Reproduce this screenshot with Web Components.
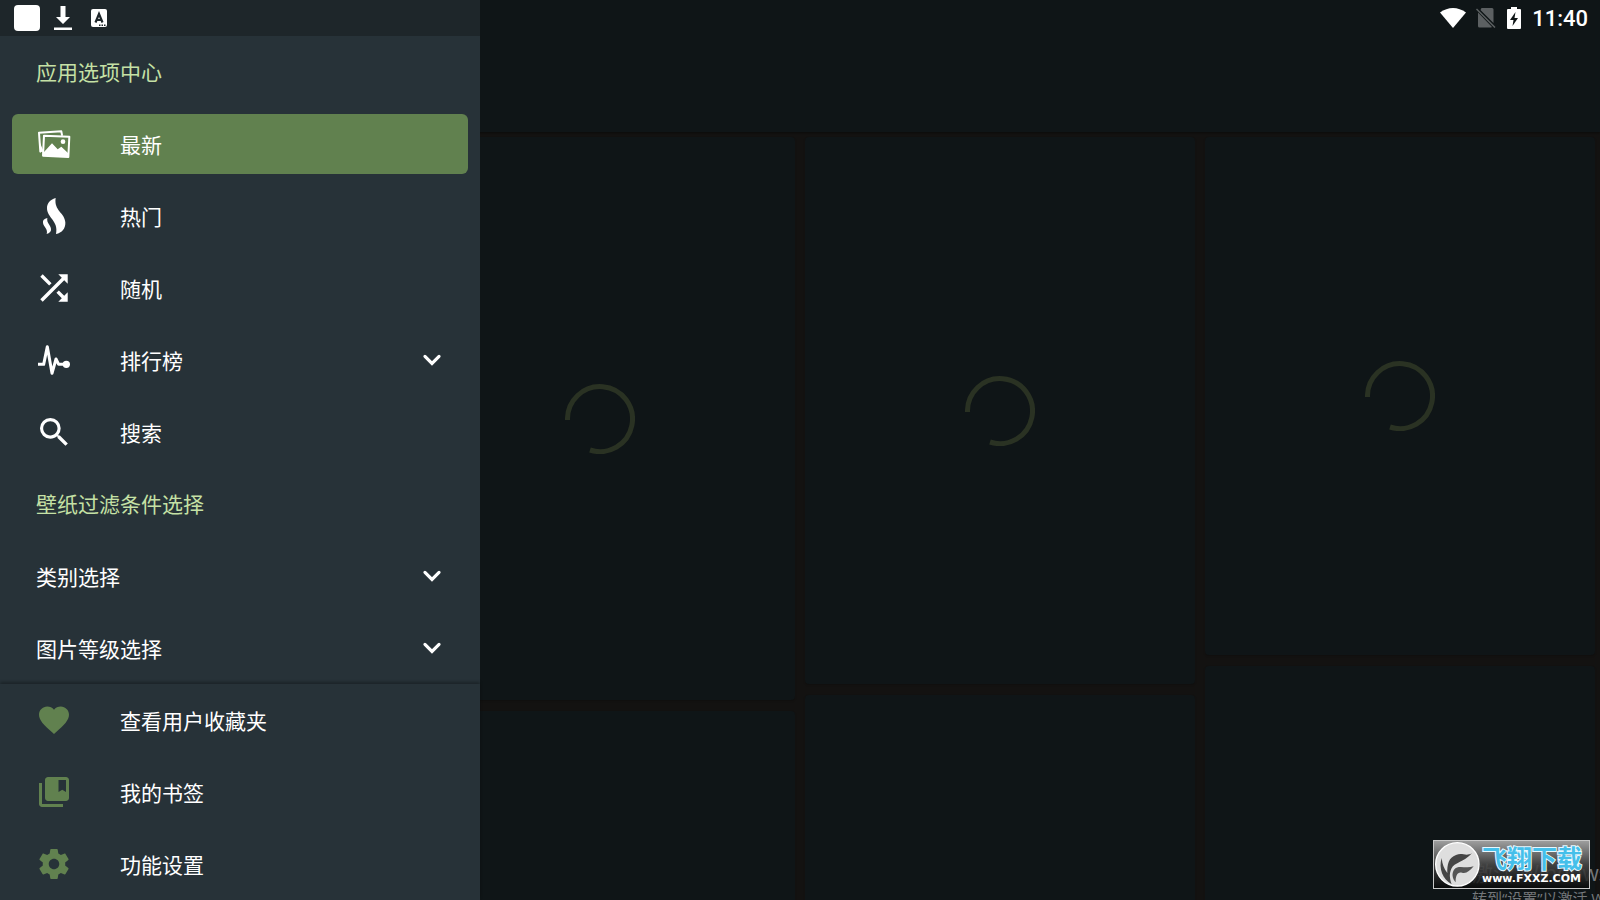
<!DOCTYPE html>
<html lang="zh-CN">
<head>
<meta charset="UTF-8">
<meta name="viewport" content="width=device-width, initial-scale=1.0">
<title>壁纸</title>
<style>
    :root {
        --surface: #273238;
        --accent: #61814f;
        --accent-light: #c5e1a5;
        --card: #0f1517;
        --backdrop: #131211;
        --row: 72px;
    }
    html, body {
        height: 100%;
    }
    body {
        margin: 0;
        overflow: hidden;
        background: var(--backdrop);
        color: #fff;
        font: 21px/30px Roboto, "Noto Sans CJK SC", sans-serif;
    }
</style>
</head>
<body>
<wallpaper-app></wallpaper-app>

<script>
const ICONS = {
    photos: `<svg viewBox="108 378 108 108">
        <path d="M124 452L121 455L117 398L184 394L186 405" fill="none" stroke="currentColor" stroke-width="6" stroke-linejoin="round" stroke-linecap="round"/>
        <path d="M118 424L129 450L128 457L121 454Z"/>
        <path d="M132 407L208 410L205 471L129 467Z" fill="none" stroke="currentColor" stroke-width="6" stroke-linejoin="round"/>
        <path d="M132 456L156 430L173 448L184 440L204 459L205 471L129 467Z"/>
        <circle cx="189" cy="425" r="7"/></svg>`,
    fire: `<svg viewBox="108 54 108 108">
        <path d="M167 54C149 59 141 71 141 85C141 113 177 124 168 162C186 159 197 146 196 127C195 99 161 92 167 54Z"/>
        <path d="M142 114C132 116 128 121 129 128C130 140 145 146 140 162C149 160 154 154 153 147C153 136 139 130 142 114Z"/></svg>`,
    shuffle: `<svg viewBox="1.5 1.5 21 21"><path d="M10.59 9.17 5.41 4 4 5.41l5.17 5.17 1.42-1.41zM14.5 4l2.04 2.04L4 18.59 5.41 20 17.96 7.46 20 9.5V4h-5.5zm.33 9.41-1.41 1.41 3.13 3.13L14.5 20H20v-5.5l-2.04 2.04-3.13-3.13z"/></svg>`,
    pulse: `<svg viewBox="108 486 108 108">
        <path d="M114 553H131L142 500L156 580L168 537L176 553H192" fill="none" stroke="currentColor" stroke-width="9" stroke-linejoin="round"/>
        <circle cx="199" cy="553" r="11"/></svg>`,
    search: `<svg viewBox="0.5 0.5 22.6 22.6"><path d="M15.5 14h-.79l-.28-.27A6.47 6.47 0 0 0 16 9.5 6.5 6.5 0 1 0 9.5 16c1.61 0 3.09-.59 4.23-1.57l.27.28v.79l5 4.99L20.49 19l-4.99-5zm-6 0C7.01 14 5 11.99 5 9.5S7.01 5 9.5 5 14 7.01 14 9.5 11.99 14 9.5 14z"/></svg>`,
    heart: `<svg viewBox="0 0 24 24"><path d="M12 21.35l-1.45-1.32C5.4 15.36 2 12.28 2 8.5 2 5.42 4.42 3 7.5 3c1.74 0 3.41.81 4.5 2.09C13.09 3.81 14.76 3 16.5 3 19.58 3 22 5.42 22 8.5c0 3.78-3.4 6.86-8.55 11.54L12 21.35z"/></svg>`,
    bookmarks: `<svg viewBox="0 0 24 24"><path d="M4 6H2v14c0 1.1.9 2 2 2h14v-2H4V6z"/><path d="M20 2H8c-1.1 0-2 .9-2 2v12c0 1.1.9 2 2 2h12c1.1 0 2-.9 2-2V4c0-1.1-.9-2-2-2zm0 10l-2.5-1.5L15 12V4h5v8z"/></svg>`,
    settings: `<svg viewBox="0 0 24 24"><path d="M19.43 12.98c.04-.32.07-.64.07-.98s-.03-.66-.07-.98l2.11-1.65c.19-.15.24-.42.12-.64l-2-3.46c-.12-.22-.39-.3-.61-.22l-2.49 1c-.52-.4-1.08-.73-1.69-.98l-.38-2.65C14.46 2.18 14.25 2 14 2h-4c-.25 0-.46.18-.49.42l-.38 2.65c-.61.25-1.17.59-1.69.98l-2.49-1c-.23-.09-.49 0-.61.22l-2 3.46c-.13.22-.07.49.12.64l2.11 1.65c-.04.32-.07.65-.07.98s.03.66.07.98l-2.11 1.65c-.19.15-.24.42-.12.64l2 3.46c.12.22.39.3.61.22l2.49-1c.52.4 1.08.73 1.69.98l.38 2.65c.03.24.24.42.49.42h4c.25 0 .46-.18.49-.42l.38-2.65c.61-.25 1.17-.59 1.69-.98l2.49 1c.23.09.49 0 .61-.22l2-3.46c.12-.22.07-.49-.12-.64l-2.11-1.65zM12 15.5c-1.93 0-3.5-1.57-3.5-3.5s1.57-3.5 3.5-3.5 3.5 1.57 3.5 3.5-1.57 3.5-3.5 3.5z"/></svg>`,
    chevron: `<svg viewBox="0 0 24 24"><path d="M7.3 9.6L12 14.3L16.7 9.6" fill="none" stroke="currentColor" stroke-width="2.1" stroke-linecap="round"/></svg>`
};

// Android status bar
class StatusBar extends HTMLElement {
    constructor() {
        super();
        this.attachShadow({ mode: 'open' });
    }

    connectedCallback() {
        this.shadowRoot.innerHTML = `
            <style>
                :host {
                    display: flex;
                    align-items: center;
                    justify-content: space-between;
                    box-sizing: border-box;
                    height: 36px;
                    padding: 0 12px 0 14px;
                    font: 500 22px/34px Roboto, sans-serif;
                }
                .group {
                    display: flex;
                    align-items: center;
                    gap: 10px;
                }
                .notices { gap: 14px; }
                .app {
                    width: 26px;
                    height: 26px;
                    border-radius: 4px;
                    background: #fff;
                }
                svg { display: block; fill: #fff; }
                .sim { opacity: 0.32; }
                time { padding-top: 2px; }
            </style>
            <div class="group notices">
                <span class="app"></span>
                <svg width="18" height="24" viewBox="0 0 18 24"><path d="M6.5 0h5v11H16l-7 7-7-7h4.5zM0 21.500h18V24H0z"/></svg>
                <svg width="28" height="24" viewBox="-1 0 28 24"><path d="M6 3h12a2 2 0 0 1 2 2v14a2 2 0 0 1-2 2H6a2 2 0 0 1-2-2V5a2 2 0 0 1 2-2z"/><path fill="none" stroke="#1e262a" stroke-width="2.2" d="M8.500 16.500L12 8L15.500 16.500M9.500 14h5"/><path fill="#1e262a" d="M12 18.500h1.500V20H12zM14.500 18.500H16V20h-1.500zM17 18.500h1.500V20H17z"/></svg>
            </div>
            <div class="group">
                <svg width="26" height="20" viewBox="0 0 26 20"><path d="M0 4.500C8-1.500 18-1.500 26 4.500L13 20z"/></svg>
                <svg class="sim" width="20" height="20" viewBox="0 0 20 20"><path d="M5.500 0H16a1.500 1.500 0 0 1 1.500 1.500V15L4.500 2zM2 4.500L16 19a2 2 0 0 1-1 .5H3.500A1.500 1.500 0 0 1 2 18z"/><path d="M.5 1L19 19.500" stroke="#fff" stroke-width="1.5"/></svg>
                <svg width="16" height="22" viewBox="3 0 16 22"><path fill-rule="evenodd" d="M8 0h6v2h3a1 1 0 0 1 1 1v18a1 1 0 0 1-1 1H5a1 1 0 0 1-1-1V3a1 1 0 0 1 1-1h3zM12.500 5L7 13h3.500l-1 6L15 11h-3.500z"/></svg>
                <time>11:40</time>
            </div>
        `;
    }
}
customElements.define('status-bar', StatusBar);

// Section title inside the drawer
class DrawerHeading extends HTMLElement {
    constructor() {
        super();
        this.attachShadow({ mode: 'open' });
    }

    connectedCallback() {
        this.shadowRoot.innerHTML = `
            <style>
                :host {
                    display: flex;
                    align-items: center;
                    height: var(--row);
                    padding: 0 36px;
                    color: var(--accent-light);
                }
                h2 {
                    margin: 0;
                    padding-top: 2px;
                    font: inherit;
                }
            </style>
            <h2><slot></slot></h2>
        `;
    }
}
customElements.define('drawer-heading', DrawerHeading);

// One row of the drawer: optional icon, label, optional chevron
class DrawerItem extends HTMLElement {
    constructor() {
        super();
        this.attachShadow({ mode: 'open' });
    }

    connectedCallback() {
        const icon = this.getAttribute('icon');
        const expandable = this.hasAttribute('expandable');

        this.shadowRoot.innerHTML = `
            <style>
                :host {
                    display: block;
                    padding: 6px 12px;
                }
                button {
                    display: flex;
                    align-items: center;
                    width: 100%;
                    height: 60px;
                    padding: 0 18px 0 24px;
                    border: 0;
                    border-radius: 6px;
                    background: none;
                    color: inherit;
                    font: inherit;
                    text-align: left;
                    cursor: pointer;
                }
                :host([active]) button { background: var(--accent); }
                svg {
                    display: block;
                    width: 36px;
                    height: 36px;
                    fill: currentColor;
                }
                .icon {
                    margin-right: 48px;
                    color: var(--icon-color, #fff);
                }
                .label { flex: 1; padding-top: 4px; }
            </style>
            <button type="button" ${expandable ? 'aria-expanded="false"' : ''}>
                ${icon ? `<span class="icon">${ICONS[icon]}</span>` : ''}
                <span class="label"><slot></slot></span>
                ${expandable ? `<span class="chevron">${ICONS.chevron}</span>` : ''}
            </button>
        `;

        const button = this.shadowRoot.querySelector('button');
        button.addEventListener('click', () => {
            if (expandable) {
                const open = button.getAttribute('aria-expanded') === 'true';
                button.setAttribute('aria-expanded', String(!open));
            }
        });
    }
}
customElements.define('drawer-item', DrawerItem);

// Navigation drawer with a pinned footer
class NavDrawer extends HTMLElement {
    constructor() {
        super();
        this.attachShadow({ mode: 'open' });
    }

    connectedCallback() {
        this.shadowRoot.innerHTML = `
            <style>
                :host {
                    display: flex;
                    flex-direction: column;
                    background: var(--surface);
                }
                .strip {
                    flex: none;
                    height: 36px;
                    background: #1e262a;
                }
                nav {
                    flex: 1;
                    min-height: 0;
                    overflow: hidden;
                }
                footer {
                    flex: none;
                    box-shadow: 0 -2px 3px rgba(0, 0, 0, 0.3);
                    --icon-color: var(--accent);
                }
            </style>
            <div class="strip"></div>
            <nav><slot></slot></nav>
            <footer><slot name="footer"></slot></footer>
        `;
    }
}
customElements.define('nav-drawer', NavDrawer);

// Wallpaper placeholder, "ratio" is width / height
class WallpaperCard extends HTMLElement {
    constructor() {
        super();
        this.attachShadow({ mode: 'open' });
    }

    connectedCallback() {
        this.shadowRoot.innerHTML = `
            <style>
                :host {
                    display: grid;
                    place-items: center;
                    aspect-ratio: ${this.getAttribute('ratio')};
                    border-radius: 4px;
                    background: var(--card);
                    box-shadow: 0 1px 2px rgba(0, 0, 0, 0.2);
                }
                svg { width: 70px; height: 70px; }
            </style>
            <svg viewBox="0 0 70 70" role="progressbar" aria-label="加载中">
                <path d="M2.5 36A32.5 32.5 0 1 1 25 66" fill="none" stroke="#2a3223" stroke-width="5"/>
            </svg>
        `;
    }
}
customElements.define('wallpaper-card', WallpaperCard);

// Site badge in the corner
class SiteBadge extends HTMLElement {
    constructor() {
        super();
        this.attachShadow({ mode: 'open' });
    }

    connectedCallback() {
        this.shadowRoot.innerHTML = `
            <style>
                :host {
                    display: flex;
                    align-items: center;
                    gap: 2px;
                    box-sizing: border-box;
                    width: 157px;
                    height: 49px;
                    padding-left: 1px;
                    border: 1px solid #c8c8c8;
                    background: linear-gradient(rgba(165, 165, 165, 0.95), rgba(70, 70, 70, 0.9) 50%, rgba(8, 8, 8, 0.8));
                    white-space: nowrap;
                }
                svg { flex: none; width: 45px; height: 45px; }
                .text {
                    display: flex;
                    flex-direction: column;
                }
                .name {
                    color: #45bfea;
                    font: bold 25px/28px "Noto Sans CJK SC", sans-serif;
                    -webkit-text-stroke: 2px #e8f8ff;
                    paint-order: stroke fill;
                }
                .site {
                    color: #fff;
                    font: bold 11px/16px "DejaVu Sans", sans-serif;
                }
            </style>
            <svg viewBox="0 0 135 135">
                <circle cx="67" cy="67" r="65" fill="#dedede" stroke="#fff" stroke-width="4"/>
                <path d="M20 48C10 80 23 111 50 127C43 106 43 94 49 80C58 61 85 62 111 34C91 44 82 31 63 39C41 47 36 67 37 93C27 80 22 67 20 48Z" fill="#454545"/>
                <path d="M57 83C70 67 91 81 116 73C104 88 94 95 81 92C68 88 61 101 62 121C51 108 50 94 57 83Z" fill="#555"/>
            </svg>
            <div class="text">
                <span class="name">飞翔下载</span>
                <span class="site">www.FXXZ.COM</span>
            </div>
        `;
    }
}
customElements.define('site-badge', SiteBadge);

class WallpaperApp extends HTMLElement {
    constructor() {
        super();
        this.attachShadow({ mode: 'open' });
    }

    connectedCallback() {
        this.shadowRoot.innerHTML = `
            <style>
                :host {
                    display: block;
                    position: relative;
                    height: 100vh;
                    overflow: hidden;
                }
                header {
                    height: 132px;
                    background: var(--card);
                    box-shadow: 0 1px 2px rgba(0, 0, 0, 0.4);
                }
                .grid {
                    display: grid;
                    grid-template-columns: repeat(4, 1fr);
                    gap: 10px;
                    padding: 5px;
                }
                .column {
                    display: flex;
                    flex-direction: column;
                    gap: 11px;
                }
                nav-drawer {
                    position: absolute;
                    top: 0;
                    bottom: 0;
                    left: 0;
                    width: min(480px, 80vw);
                }
                status-bar {
                    position: absolute;
                    top: 0;
                    left: 0;
                    right: 0;
                }
                .activation {
                    position: absolute;
                    left: calc(100% - 128px);
                    top: calc(100% - 39px);
                    color: #74777a;
                    white-space: nowrap;
                    font: 15px/25px "Open Sans", "Noto Sans CJK SC", sans-serif;
                }
                .activation p { margin: 0; }
                .activation .title { font-size: 21px; }
                site-badge {
                    position: absolute;
                    right: 10px;
                    bottom: 11px;
                }
            </style>
            <main>
                <header></header>
                <div class="grid">
                    <div class="column">
                        <wallpaper-card ratio="390 / 540"></wallpaper-card>
                        <wallpaper-card ratio="390 / 540"></wallpaper-card>
                    </div>
                    <div class="column">
                        <wallpaper-card ratio="390 / 563"></wallpaper-card>
                        <wallpaper-card ratio="390 / 563"></wallpaper-card>
                    </div>
                    <div class="column">
                        <wallpaper-card ratio="390 / 547"></wallpaper-card>
                        <wallpaper-card ratio="390 / 547"></wallpaper-card>
                    </div>
                    <div class="column">
                        <wallpaper-card ratio="390 / 518"></wallpaper-card>
                        <wallpaper-card ratio="390 / 600"></wallpaper-card>
                    </div>
                </div>
            </main>

            <nav-drawer>
                <drawer-heading>应用选项中心</drawer-heading>
                <drawer-item icon="photos" active>最新</drawer-item>
                <drawer-item icon="fire">热门</drawer-item>
                <drawer-item icon="shuffle">随机</drawer-item>
                <drawer-item icon="pulse" expandable>排行榜</drawer-item>
                <drawer-item icon="search">搜索</drawer-item>
                <drawer-heading>壁纸过滤条件选择</drawer-heading>
                <drawer-item expandable>类别选择</drawer-item>
                <drawer-item expandable>图片等级选择</drawer-item>
                <drawer-item slot="footer" icon="heart">查看用户收藏夹</drawer-item>
                <drawer-item slot="footer" icon="bookmarks">我的书签</drawer-item>
                <drawer-item slot="footer" icon="settings">功能设置</drawer-item>
            </nav-drawer>
            <status-bar></status-bar>

            <div class="activation">
                <p class="title">激活 Windows</p>
                <p>转到“设置”以激活 Windows。</p>
            </div>
            <site-badge></site-badge>
        `;
    }
}
customElements.define('wallpaper-app', WallpaperApp);
</script>
</body>
</html>
